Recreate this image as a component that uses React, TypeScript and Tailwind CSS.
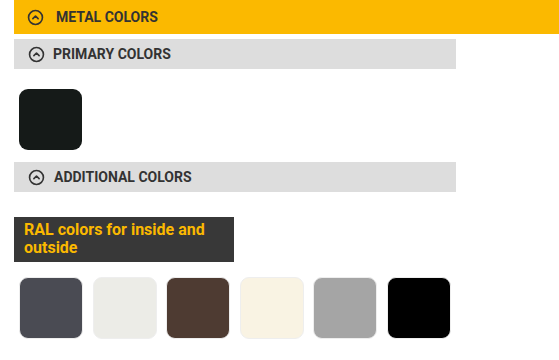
import React from "react";

const ToggleIcon = () => (
  <svg width="17" height="17" viewBox="0 0 24 24" fill="none" stroke="currentColor" strokeWidth="2.3" strokeLinecap="round" strokeLinejoin="round" className="shrink-0">
    <circle cx="12" cy="12" r="9.8" />
    <path d="m8.3 13.6 3.7-3.7 3.7 3.7" />
  </svg>
);

const Header = ({ title, gap }: { title: string; gap: string }) => (
  <div className="flex items-center h-[30px] w-[442px] bg-[#dddddd] pl-[14px] text-[#333333]">
    <ToggleIcon />
    <span className={`${gap} text-[14px] font-bold uppercase`}>{title}</span>
  </div>
);

const ralColors = ["#4a4b53", "#ecece7", "#4e3b32", "#f9f3e3", "#a5a5a5", "#000000"];

export default function App() {
  return (
    <div className="min-h-screen bg-white font-['Roboto',sans-serif] pl-[14px]">
      {/* Metal colors bar */}
      <div className="flex items-center h-[34px] bg-[#fbb900] pl-[13px] text-[#333333]">
        <ToggleIcon />
        <span className="ml-[12px] text-[14px] font-bold uppercase">Metal Colors</span>
      </div>

      <div className="mt-[5px]">
        <Header title="Primary Colors" gap="ml-[8px]" />
      </div>

      <div className="pl-[5px] mt-[20px]">
        <div className="w-[63px] h-[61px] rounded-[9px] bg-[#151a18]" />
      </div>

      <div className="mt-[12px]">
        <Header title="Additional Colors" gap="ml-[9px]" />
      </div>

      <div className="mt-[25px] w-[220px] bg-[#383838] px-[10px] pt-[4px] pb-[5px]">
        <p className="text-[16px] font-bold leading-[18px] text-[#fbb900]">RAL colors for inside and outside</p>
      </div>

      <div className="flex gap-[9.6px] pl-[5px] mt-[15px]">
        {ralColors.map((c) => (
          <div
            key={c}
            className="w-[64px] h-[62px] rounded-[9px] border border-[#eeeeee]"
            style={{ backgroundColor: c }}
          />
        ))}
      </div>
    </div>
  );
}
